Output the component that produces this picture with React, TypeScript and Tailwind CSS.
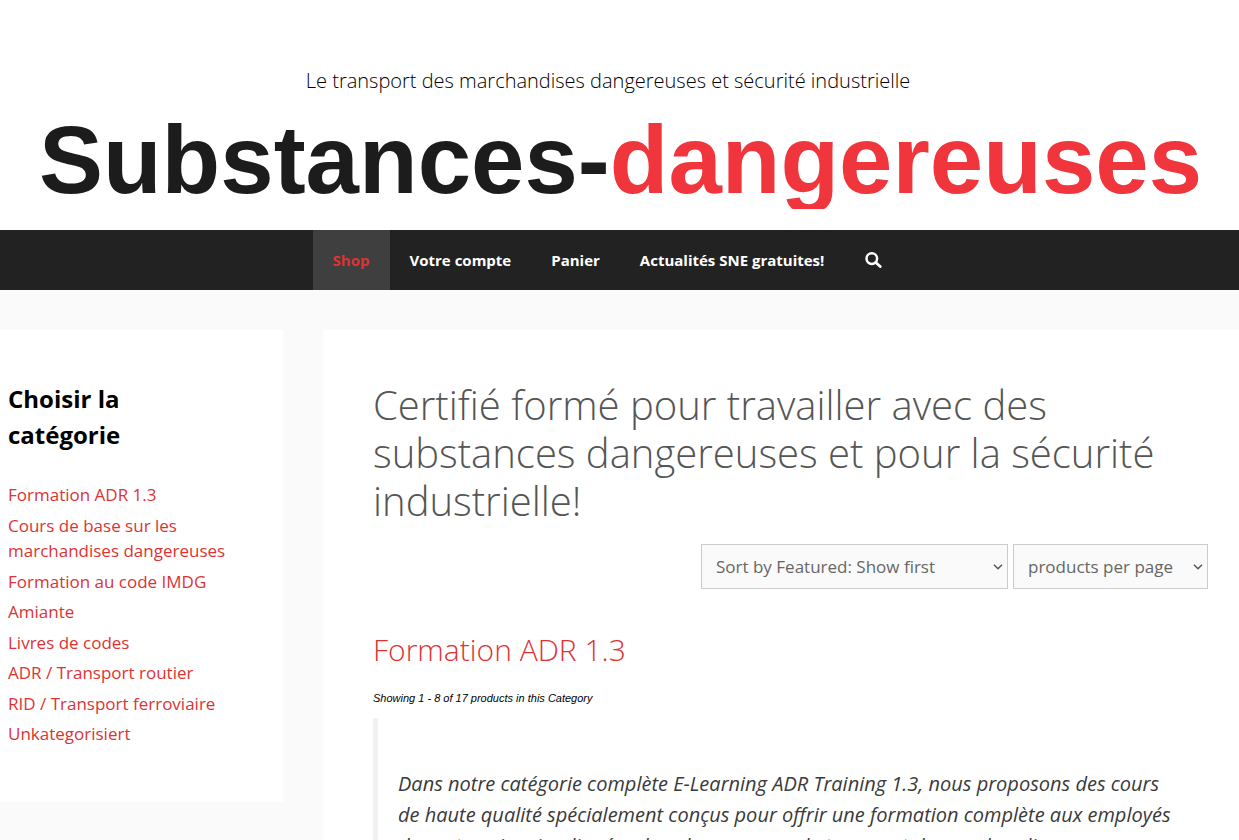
const NAV = [
  { label: "Shop", active: true },
  { label: "Votre compte", active: false },
  { label: "Panier", active: false },
  { label: "Actualités SNE gratuites!", active: false },
];

const CATEGORIES = [
  "Formation ADR 1.3",
  "Cours de base sur les marchandises dangereuses",
  "Formation au code IMDG",
  "Amiante",
  "Livres de codes",
  "ADR / Transport routier",
  "RID / Transport ferroviaire",
  "Unkategorisiert",
];

function SearchIcon() {
  return (
    <svg width="17" height="16" viewBox="0 0 17 16" fill="none" stroke="currentColor" aria-hidden="true">
      <circle cx="6.8" cy="6.6" r="5.3" strokeWidth="2.5" />
      <path d="M10.8 10.5 15.2 14.5" strokeWidth="2.8" strokeLinecap="round" />
    </svg>
  );
}

function Select({ label, value, className }: { label: string; value: string; className: string }) {
  return (
    <div className={`relative ${className}`}>
      <select
        aria-label={label}
        className="h-[45px] w-full appearance-none border border-[#cccccc] bg-[#fafafa] pr-5 pl-[14px] text-[17px] text-[#666666]"
      >
        <option>{value}</option>
      </select>
      <svg
        className="pointer-events-none absolute top-5 right-[5px] text-[#555555]"
        width="10"
        height="6"
        viewBox="0 0 10 6"
        fill="none"
        stroke="currentColor"
        strokeWidth="1.5"
        aria-hidden="true"
      >
        <path d="M1 .8 5 4.8 9 .8" />
      </svg>
    </div>
  );
}

function Header() {
  return (
    <header className="bg-white pt-[66px] pb-[21px]">
      <p className="pr-[23px] text-center text-[20px] leading-[30px] font-light text-black">
        Le transport des marchandises dangereuses et sécurité industrielle
      </p>
      <div className="mt-[10px] h-[103px] overflow-hidden pl-[2px] text-center font-['Liberation_Sans',Arial,sans-serif] text-[96px] leading-[108px] font-bold whitespace-nowrap text-[#1c1c1c]">
        <a href="#">
          Substances-<span className="text-[#f0353d]">dangereuses</span>
        </a>
      </div>
    </header>
  );
}

function Navigation() {
  return (
    <nav className="bg-[#222222] pr-[24px]">
      <ul className="flex justify-center">
        {NAV.map((item) => (
          <li key={item.label}>
            <a
              href="#"
              className={
                item.active
                  ? "block bg-[#3f3f3f] px-5 text-[15px] leading-[60px] font-bold text-[#dd3333]"
                  : "block px-5 text-[15px] leading-[60px] font-bold text-white"
              }
            >
              {item.label}
            </a>
          </li>
        ))}
        <li>
          <button type="button" aria-label="Rechercher" className="flex h-[60px] items-center pr-5 pl-[21px] text-white">
            <SearchIcon />
          </button>
        </li>
      </ul>
    </nav>
  );
}

function Sidebar() {
  return (
    <aside className="w-[283px] shrink-0 bg-white pt-[51px] pr-[50px] pb-[50px] pl-2">
      <h2 className="mb-[29px] pr-[60px] text-[24px] leading-[36px] font-bold text-black">Choisir la catégorie</h2>
      <ul>
        {CATEGORIES.map((name) => (
          <li key={name} className="mb-[5px] text-[17px] leading-normal">
            <a href="#" className="text-[#dd3333]">
              {name}
            </a>
          </li>
        ))}
      </ul>
    </aside>
  );
}

export default function App() {
  return (
    <div className="min-h-screen bg-[#fafafa] font-['Open_Sans',sans-serif]">
      <Header />
      <Navigation />
      <div className="flex items-start gap-10 pt-10">
        <Sidebar />
        <main className="min-w-0 flex-1 bg-white px-[50px] pt-[51px] pb-[50px]">
          <h1 className="text-[40px] leading-[48px] font-light text-[#555555]">
            Certifié formé pour travailler avec des substances dangereuses et pour la sécurité industrielle!
          </h1>
          <form className="-mr-[19px] mt-[19px] flex justify-end gap-[5px]">
            <Select label="Sort by" value="Sort by Featured: Show first" className="w-[307px]" />
            <Select label="Products per page" value="products per page" className="w-[195px]" />
          </form>
          <h2 className="mt-[43px] text-[30px] leading-[36px] font-light text-[#dd3333]">Formation ADR 1.3</h2>
          <p className="mt-[21px] font-['Liberation_Sans',Arial,sans-serif] text-[11px] leading-[18px] text-black italic">
            Showing 1 - 8 of 17 products in this Category
          </p>
          <blockquote className="mt-[11px] border-l-[5px] border-[#f1f1f1] py-[50px] pr-[10px] pl-5 text-[20px] leading-[31px] text-[#3a3a3a] italic">
            Dans notre catégorie complète E-Learning ADR Training 1.3, nous proposons des cours de haute qualité
            spécialement conçus pour offrir une formation complète aux employés des entreprises impliquées dans le
            processus de transport de marchandises dangereuses.
          </blockquote>
        </main>
      </div>
    </div>
  );
}
